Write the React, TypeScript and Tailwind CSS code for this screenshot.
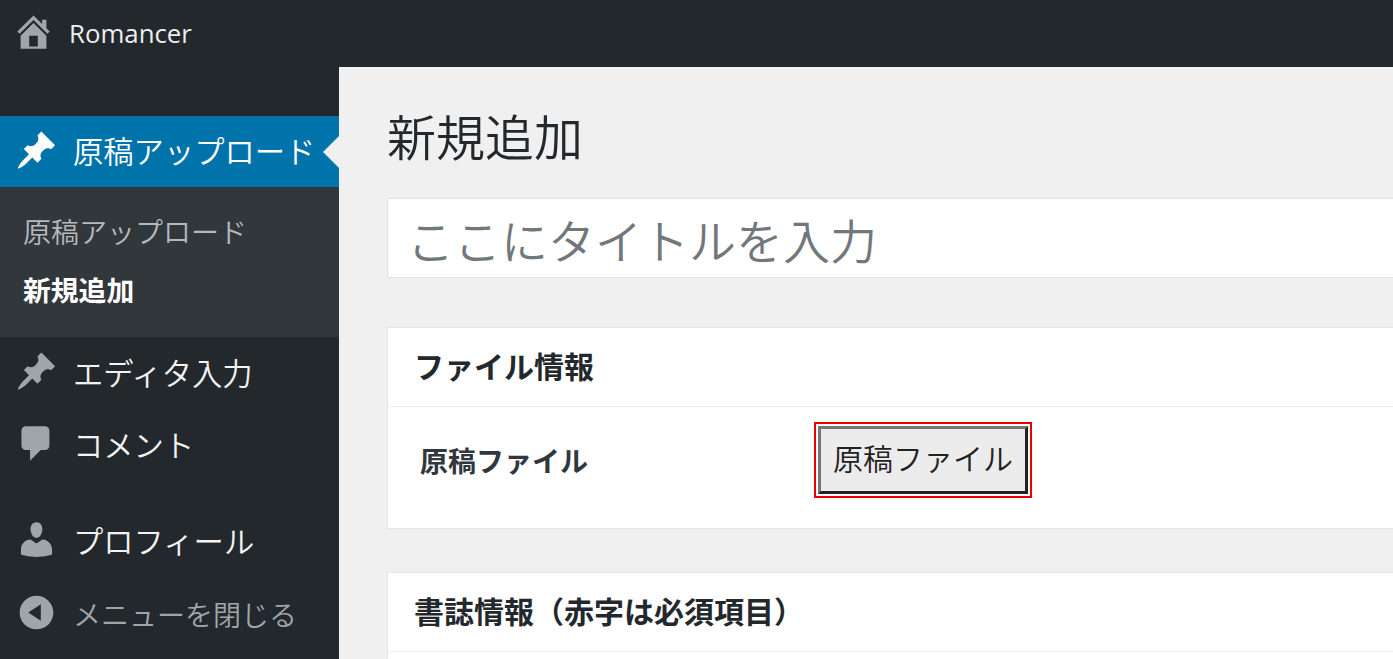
const jp = { fontFamily: '"Noto Sans CJK JP", sans-serif' };

const paths = {
  pin: "M10.44 3.02l1.82-1.82 6.36 6.35-1.83 1.82c-1.05-.68-2.48-.57-3.41.36l-.75.75c-.92.93-1.04 2.35-.35 3.41l-1.83 1.82-2.41-2.41-2.8 2.79c-.42.42-3.38 2.71-3.8 2.29s1.86-3.39 2.28-3.81l2.79-2.79L4.1 9.36l1.83-1.82c1.05.69 2.48.57 3.4-.36l.75-.75c.93-.92 1.05-2.35.36-3.41z",
  home: "M16 8.5l1.53 1.53-1.06 1.06L10 4.62l-6.47 6.47-1.06-1.06L10 2.5l4 4v-2h2v4zm-6-2.46l6 5.99V18H4v-5.97zM12 17v-5H8v5h4z",
  comment: "M5 2h9c1.1 0 2 .9 2 2v7c0 1.1-.9 2-2 2h-2l-5 5v-5H5c-1.1 0-2-.9-2-2V4c0-1.1.9-2 2-2z",
  user: "M10 9.25c-2.27 0-2.73-3.44-2.73-3.44C7 4.02 7.82 2 9.97 2c2.16 0 2.98 2.02 2.71 3.81 0 0-.41 3.44-2.68 3.44zm0 2.57L12.72 10c2.39 0 4.52 2.33 4.52 4.53v2.49s-3.65 1.13-7.24 1.13c-3.65 0-7.24-1.13-7.24-1.13v-2.49c0-2.25 1.94-4.48 4.47-4.48z",
  collapse: "M10 2.16c4.33 0 7.84 3.51 7.84 7.84s-3.51 7.84-7.84 7.84S2.16 14.33 2.16 10 5.71 2.16 10 2.16zm2 11.72V6.12L6.18 9.97z",
};

function Icon({ d, className }: { d: string; className?: string }) {
  return (
    <svg viewBox="0 0 20 20" className={className} fill="currentColor" aria-hidden="true">
      <path d={d} />
    </svg>
  );
}

function MenuItem({ icon, label, className, text = "text-[30.3px] text-[#f4f4f4] mb-[1px]" }: { icon: string; label: string; className: string; text?: string }) {
  return (
    <div className={`flex items-center pl-[15px] ${className}`}>
      <Icon d={icon} className="w-[43px] h-[43px] text-[#a0a5aa] shrink-0 mb-[3px]" />
      <span className={`ml-[15px] leading-none whitespace-nowrap font-[350] ${text}`}>{label}</span>
    </div>
  );
}

export default function App() {
  return (
    <div className="w-[1393px] h-[659px] overflow-hidden flex flex-col bg-[#f0f0f0]" style={jp}>
      <header className="h-[67px] shrink-0 bg-[#23282d] flex items-center pl-[12px]">
        <Icon d={paths.home} className="w-[43px] h-[43px] text-[#a0a5aa] mb-[4px]" />
        <span className="ml-[14px] text-[25.8px] text-[#eeeeee] leading-none" style={{ fontFamily: '"Open Sans", sans-serif' }}>Romancer</span>
      </header>
      <div className="flex flex-1 min-h-0">
        <aside className="w-[339px] shrink-0 bg-[#23282d] pt-[49px] flex flex-col">
          <div className="relative h-[71px] bg-[#0073aa] flex items-center pl-[15px]">
            <Icon d={paths.pin} className="w-[43px] h-[43px] text-white shrink-0 mb-[3px]" />
            <span className="ml-[15px] text-[30.3px] leading-none font-[350] text-white whitespace-nowrap mb-[2px]">原稿アップロード</span>
            <div className="absolute right-0 top-[20px] border-y-[16px] border-y-transparent border-r-[16px] border-r-[#f0f0f0]" />
          </div>
          <div className="h-[150px] bg-[#32373c] pl-[23px] pt-[30px] flex flex-col">
            <span className="text-[28px] leading-none font-[350] text-[#b4b9be] whitespace-nowrap">原稿アップロード</span>
            <span className="mt-[31px] text-[27.8px] leading-none font-bold text-white whitespace-nowrap">新規追加</span>
          </div>
          <MenuItem icon={paths.pin} label="エディタ入力" className="h-[72px]" />
          <MenuItem icon={paths.comment} label="コメント" className="h-[72px]" />
          <MenuItem icon={paths.user} label="プロフィール" className="h-[72px] mt-[24px]" />
          <MenuItem icon={paths.collapse} label="メニューを閉じる" className="h-[74px]" text="text-[28px] text-[#a0a5aa]" />
        </aside>
        <main className="flex-1 min-w-0 pl-[48px] overflow-hidden">
          <h1 className="h-[131px] pt-[38px] text-[49px] font-[350] leading-[60px] text-[#23282d] whitespace-nowrap">新規追加</h1>
          <div className="h-[80px] bg-white border border-[#e2e2e2] border-r-0 flex items-center pl-[19px] text-[47px] font-[350] leading-none text-[#72777c] whitespace-nowrap">ここにタイトルを入力</div>
          <section className="mt-[49px] h-[202px] bg-white border border-[#e5e5e5] border-r-0">
            <div className="h-[79px] border-b border-[#eeeeee] flex items-center pl-[26px] pb-[4px] text-[30px] font-bold leading-none text-[#23282d] whitespace-nowrap">ファイル情報</div>
            <div className="flex items-start pl-[32px]">
              <span className="mt-[39px] w-[394px] text-[28px] font-bold leading-none text-[#32373c] whitespace-nowrap">原稿ファイル</span>
              <div className="mt-[15px] border-2 border-[#ee0000] p-[2px]">
                <button className="h-[68px] w-[210px] bg-[#ececec] border-[3px] border-t-[#767676] border-l-[#767676] border-r-[#222222] border-b-[#222222] text-[30px] font-[350] leading-none text-[#222222] whitespace-nowrap pb-[6px]">原稿ファイル</button>
              </div>
            </div>
          </section>
          <section className="mt-[43px] h-[200px] bg-white border border-[#e5e5e5] border-r-0">
            <div className="h-[79px] border-b border-[#eeeeee] flex items-center pl-[26px] pb-[5px] text-[30px] font-bold leading-none text-[#23282d] whitespace-nowrap">書誌情報（赤字は必須項目）</div>
          </section>
        </main>
      </div>
    </div>
  );
}
